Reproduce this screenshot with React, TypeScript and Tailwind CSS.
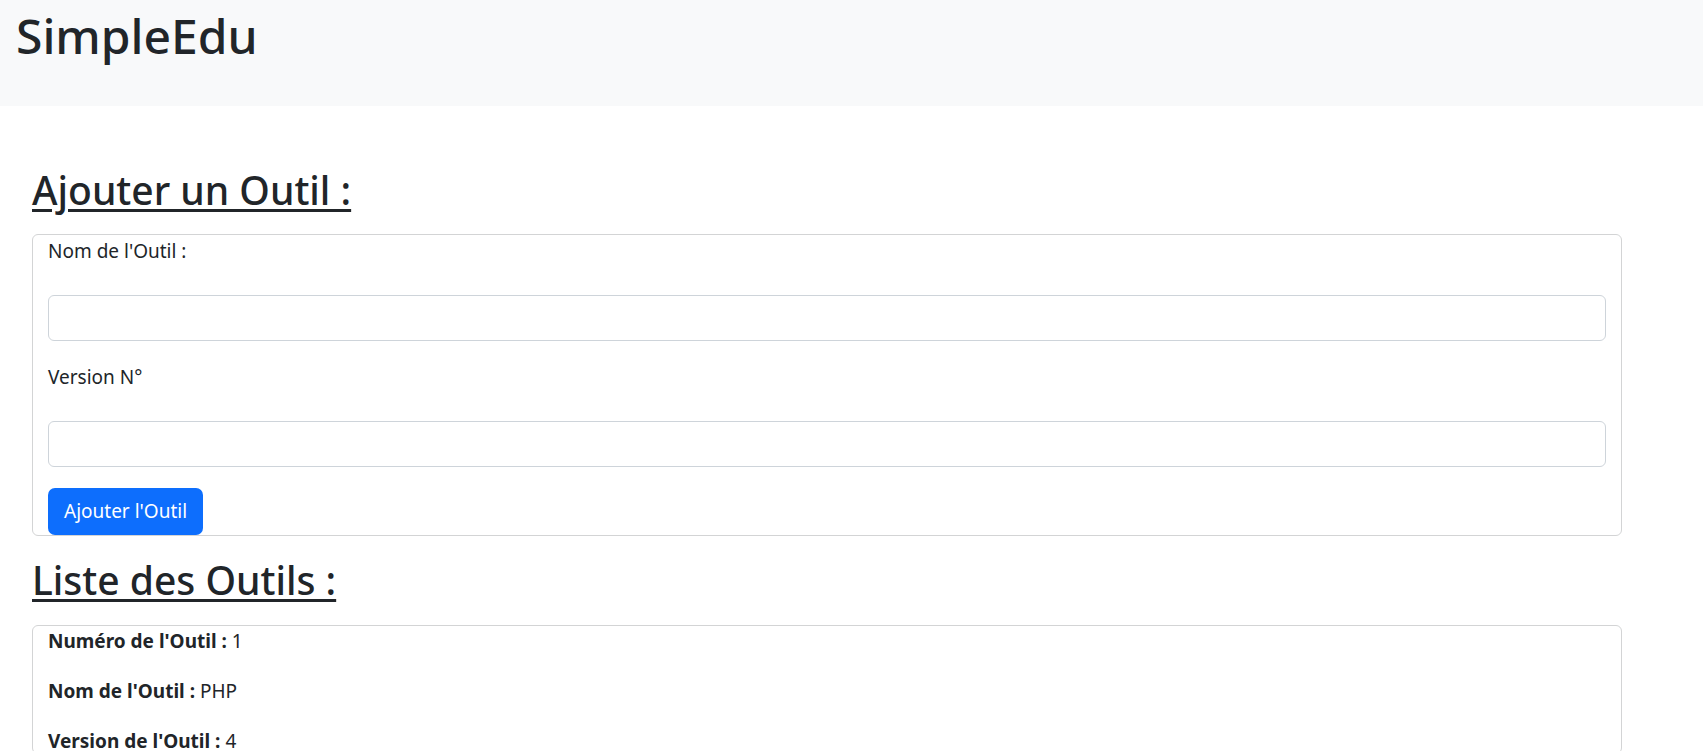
import React from "react";

const Field = ({ label, last }: { label: string; last?: boolean }) => {
  return (
    <div className={last ? "" : "mb-[24px]"}>
      <label className="block mb-[32px] text-[19px]">{label}</label>
      <input
        type="text"
        className="block w-full h-[46px] border border-[#ced4da] rounded-[6px] px-3 bg-white outline-none"
      />
    </div>
  );
};

const App = () => {
  const outils = [{ id: 1, nom: "PHP", version: "4" }];

  return (
    <div
      className="h-[751px] overflow-hidden bg-white text-[#212529] text-[16px] leading-[24px]"
      style={{ fontFamily: '"Noto Sans", "Open Sans", sans-serif' }}
    >
      <nav className="h-[106px] bg-[#f8f9fa] px-[16px] pt-[6px]">
        <h1 className="text-[48px] leading-[60px] font-medium">SimpleEdu</h1>
      </nav>

      <div className="px-[32px] pt-[60px]">
        <div className="w-[1590px]">
          <h2 className="text-[39px] leading-[48px] font-medium underline decoration-[3px] underline-offset-[4px] mb-[20px]">
            Ajouter un Outil :
          </h2>
          <form className="border border-[#d3d4d5] rounded-[6px] px-[15px] pt-[4px]">
            <Field label="Nom de l'Outil :" />
            <Field label="Version N°" last />
            <button
              type="button"
              className="mt-[21px] h-[47px] px-[16px] rounded-[7px] bg-[#0d6efd] text-white text-[19px] leading-[27px]"
            >
              Ajouter l'Outil
            </button>
          </form>

          <h2 className="mt-[20px] text-[39px] leading-[48px] font-medium underline decoration-[3px] underline-offset-[4px] mb-[21px]">
            Liste des Outils :
          </h2>
          {outils.map((o) => (
            <div
              key={o.id}
              className="border border-[#d3d4d5] rounded-[6px] px-[15px] pt-[3px] flex flex-col gap-[26px] text-[19px]"
            >
              <p>
                <b>Numéro de l'Outil :</b> {o.id}
              </p>
              <p>
                <b>Nom de l'Outil :</b> {o.nom}
              </p>
              <p>
                <b>Version de l'Outil :</b> {o.version}
              </p>
            </div>
          ))}
        </div>
      </div>
    </div>
  );
};

export default App;
